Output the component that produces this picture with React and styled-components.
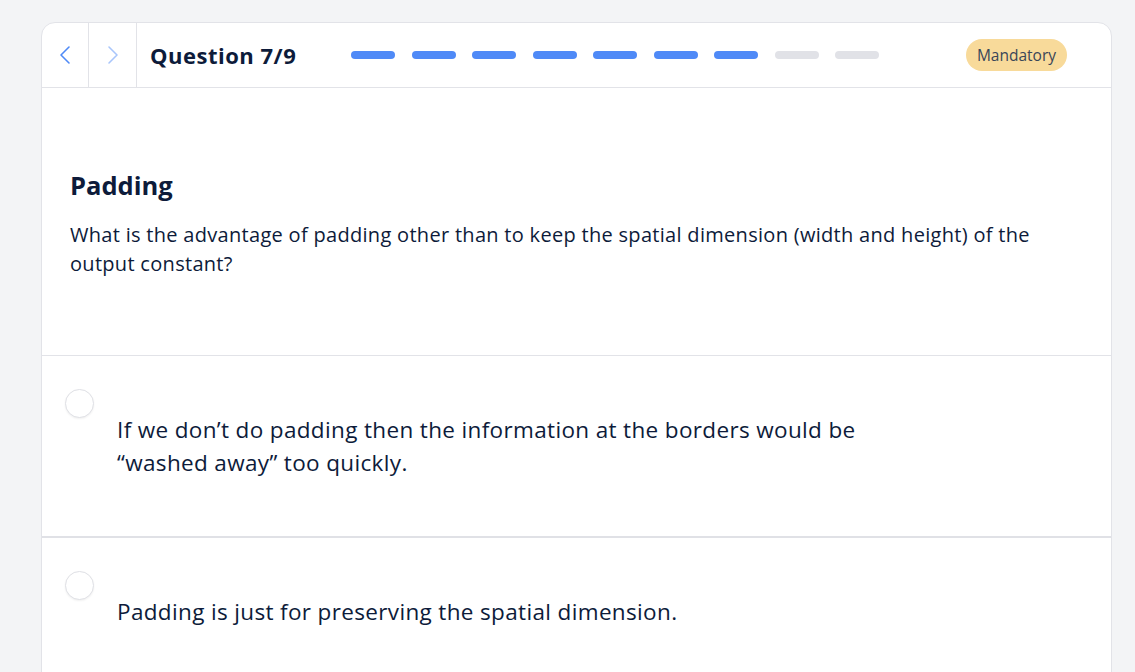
import React from "react";
import styled, { createGlobalStyle } from "styled-components";

const GlobalStyle = createGlobalStyle`
  html, body {
    margin: 0;
    padding: 0;
    background: #f3f4f6;
    font-family: "Open Sans", "Liberation Sans", sans-serif;
    color: #0d1b3a;
  }
`;

const Page = styled.div`
  padding: 22px 23px 0 41px;
  height: 672px;
  box-sizing: border-box;
  overflow: hidden;
`;

const Card = styled.div`
  background: #fff;
  border: 1px solid #e2e3e8;
  border-radius: 14px;
  overflow: hidden;
  min-height: 700px;
`;

const Header = styled.div`
  display: flex;
  align-items: center;
  height: 64px;
  border-bottom: 1px solid #e2e3e8;
`;

const NavButton = styled.div`
  width: ${(p) => (p.$faded ? 47 : 46)}px;
  height: 100%;
  display: flex;
  align-items: center;
  justify-content: center;
  border-right: 1px solid #e2e3e8;
  color: ${(p) => (p.$faded ? "#a9c6fb" : "#4f8af7")};
`;

const Title = styled.h2`
  margin: 0 0 0 13px;
  font-size: 22px;
  letter-spacing: 0.5px;
  font-weight: 700;
  color: #0d1b3a;
  width: 201px;
`;

const Progress = styled.div`
  display: flex;
  gap: 16.5px;
`;

const Step = styled.div`
  width: 44px;
  height: 8px;
  border-radius: 4px;
  background: ${(p) => (p.$done ? "#4f8af7" : "#e1e2e7")};
`;

const Pill = styled.div`
  margin-left: auto;
  margin-right: 44px;
  height: 32px;
  padding: 0 11px;
  display: flex;
  align-items: center;
  border-radius: 16px;
  background: #f8da9a;
  color: #3a4658;
  font-size: 15.5px;
`;

const Body = styled.div`
  padding: 80px 28px 77px 28px;
  border-bottom: 1px solid #e2e3e8;
`;

const Heading = styled.h1`
  margin: 0 0 18px;
  font-size: 25.5px;
  font-weight: 700;
  color: #0d1b3a;
`;

const Question = styled.p`
  margin: 0;
  font-size: 20px;
  letter-spacing: 0.3px;
  line-height: 29px;
  color: #0d1b3a;
`;

const Option = styled.div`
  display: flex;
  align-items: flex-start;
  min-height: ${(p) => p.$h}px;
  box-sizing: border-box;
  padding: 33px 24px 0 23px;
  border-bottom: 2px solid #e0e1e6;
`;

const Radio = styled.div`
  flex: none;
  width: 27px;
  height: 27px;
  border-radius: 50%;
  border: 1px solid #dfe0e5;
  box-shadow: 0 1px 2px rgba(0, 0, 0, 0.06);
  background: #fff;
`;

const OptionText = styled.div`
  margin: 24px 0 0 23px;
  max-width: 760px;
  font-size: 22.5px;
  letter-spacing: 0.35px;
  line-height: 33px;
  color: #0d1b3a;
`;

const Chevron = ({ dir }) => (
  <svg width="12" height="20" viewBox="0 0 12 20" fill="none">
    <polyline
      points={dir === "left" ? "10,2 2,10 10,18" : "2,2 10,10 2,18"}
      stroke="currentColor"
      strokeWidth="1.6"
      strokeLinecap="round"
      strokeLinejoin="round"
    />
  </svg>
);

const steps = [1, 1, 1, 1, 1, 1, 1, 0, 0];

const options = [
  {
    text: "If we don\u2019t do padding then the information at the borders would be \u201cwashed away\u201d too quickly.",
    h: 182,
  },
  { text: "Padding is just for preserving the spatial dimension.", h: 182 },
];

export default function App() {
  return (
    <>
      <GlobalStyle />
      <Page>
        <Card>
          <Header>
            <NavButton>
              <Chevron dir="left" />
            </NavButton>
            <NavButton $faded>
              <Chevron dir="right" />
            </NavButton>
            <Title>Question 7/9</Title>
            <Progress>
              {steps.map((s, i) => (
                <Step key={i} $done={!!s} />
              ))}
            </Progress>
            <Pill>Mandatory</Pill>
          </Header>
          <Body>
            <Heading>Padding</Heading>
            <Question>
              What is the advantage of padding other than to keep the spatial dimension (width and height) of the output constant?
            </Question>
          </Body>
          {options.map((o, i) => (
            <Option key={i} $h={o.h}>
              <Radio />
              <OptionText>{o.text}</OptionText>
            </Option>
          ))}
        </Card>
      </Page>
    </>
  );
}
